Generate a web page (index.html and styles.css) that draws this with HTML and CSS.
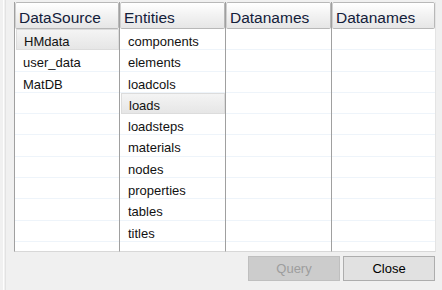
FILE: index.html
```html
<!DOCTYPE html>
<html lang="en">
<head>
    <meta charset="UTF-8">
    <title>Data Browser</title>
    <link rel="stylesheet" href="styles.css">
</head>
<body>

    <div class="window">
        <div class="splitter"></div>

        <div class="main">
            <div class="panels">
                <div class="panel">
                    <div class="header">DataSource</div>
                    <div class="rows">
                        <div class="row selected">HMdata</div>
                        <div class="row">user_data</div>
                        <div class="row">MatDB</div>
                        <div class="row"></div>
                        <div class="row"></div>
                        <div class="row"></div>
                        <div class="row"></div>
                        <div class="row"></div>
                        <div class="row"></div>
                        <div class="row"></div>
                        <div class="row"></div>
                    </div>
                </div>

                <div class="panel">
                    <div class="header">Entities</div>
                    <div class="rows">
                        <div class="row">components</div>
                        <div class="row">elements</div>
                        <div class="row">loadcols</div>
                        <div class="row selected">loads</div>
                        <div class="row">loadsteps</div>
                        <div class="row">materials</div>
                        <div class="row">nodes</div>
                        <div class="row">properties</div>
                        <div class="row">tables</div>
                        <div class="row">titles</div>
                        <div class="row"></div>
                    </div>
                </div>

                <div class="panel">
                    <div class="header">Datanames</div>
                    <div class="rows">
                        <div class="row"></div>
                        <div class="row"></div>
                        <div class="row"></div>
                        <div class="row"></div>
                        <div class="row"></div>
                        <div class="row"></div>
                        <div class="row"></div>
                        <div class="row"></div>
                        <div class="row"></div>
                        <div class="row"></div>
                        <div class="row"></div>
                    </div>
                </div>

                <div class="panel last">
                    <div class="header">Datanames</div>
                    <div class="rows">
                        <div class="row"></div>
                        <div class="row"></div>
                        <div class="row"></div>
                        <div class="row"></div>
                        <div class="row"></div>
                        <div class="row"></div>
                        <div class="row"></div>
                        <div class="row"></div>
                        <div class="row"></div>
                        <div class="row"></div>
                        <div class="row"></div>
                    </div>
                </div>
            </div>

            <div class="buttons">
                <button class="btn" disabled>Query</button>
                <button class="btn">Close</button>
            </div>
        </div>
    </div>

</body>
</html>
```

FILE: styles.css
```css
body {
    margin: 0;
    background-color: #f0f0f0;
    font-family: "Liberation Sans", Arial, sans-serif;
    color: #000;
}
.window {
    display: flex;
    width: 442px;
    height: 290px;
    overflow: hidden;
}
.splitter {
    width: 1px;
    margin-left: 3px;
    border-left: 1px solid #fdfdfd;
    border-right: 1px solid #e2e2e2;
}
.main {
    display: flex;
    flex-direction: column;
    padding: 2px 0 0 8px;
}
.panels {
    display: grid;
    grid-template-columns: 105px 106px 106px 105px;
    height: 250px;
}
.panel {
    display: flex;
    flex-direction: column;
    border-left: 1px solid #a0a0a0;
    border-bottom: 1px solid #d8d8d8;
    background-color: #fff;
    overflow: hidden;
}
.panel.last {
    border-right: 1px solid #e4e4e4;
}
.header {
    flex-shrink: 0;
    height: 27px;
    box-sizing: border-box;
    padding: 6px 0 0 3px;
    border: 1px solid #b8b8b8;
    border-left-color: #d0d0d0;
    border-radius: 2px;
    background: linear-gradient(#ffffff, #f3f3f3 45%, #e6e6e6);
    font-size: 15.5px;
    color: #13203a;
}
.rows {
    flex: 1;
    overflow: hidden;
}
.row {
    height: 21.3px;
    box-sizing: border-box;
    padding: 5px 0 0 8px;
    border-bottom: 1px solid #eef4fa;
    font-size: 13px;
    color: #111;
    white-space: nowrap;
}
.row.selected {
    margin-left: 1px;
    padding-left: 7px;
    padding-top: 4px;
    border: 1px solid #dcdcdc;
    background: linear-gradient(#f4f4f4, #e6e6e6);
}
.buttons {
    display: flex;
    justify-content: flex-end;
    gap: 3px;
    margin-top: 4px;
    padding-right: 1px;
}
.btn {
    width: 92px;
    height: 25px;
    font-family: "Liberation Sans", Arial, sans-serif;
    font-size: 13px;
    color: #000;
    background-color: #e1e1e1;
    border: 1px solid #adadad;
    border-radius: 0;
    padding: 0;
}
.btn:disabled {
    color: #9d9d9d;
    background-color: #cccccc;
    border-color: #bfbfbf;
}
```
